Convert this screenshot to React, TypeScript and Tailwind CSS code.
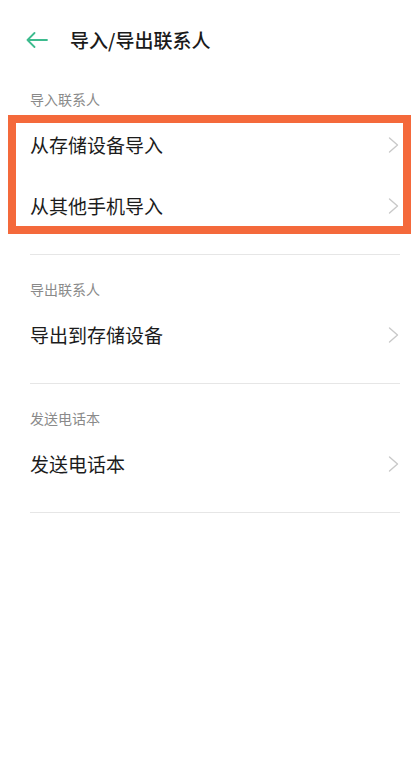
const font = { fontFamily: '"Noto Sans CJK SC", "Noto Sans", sans-serif' }

function BackArrow() {
  return (
    <svg width="22" height="16" viewBox="0 0 22 16" fill="none" className="shrink-0">
      <path d="M1.5 8H21M8.5 1L1.5 8L8.5 15" stroke="#3dbb8e" strokeWidth="1.8" strokeLinecap="round" strokeLinejoin="round" />
    </svg>
  )
}

function Row({ label }: { label: string }) {
  return (
    <div className="flex h-[61px] items-center justify-between pl-[30px] pr-[20px]">
      <span className="text-[19px] leading-6 text-[#1c1c1c]">{label}</span>
      <svg width="11" height="16" viewBox="0 0 11 16" fill="none">
        <path d="M1.5 1L9.5 8L1.5 15" stroke="#c9c9c9" strokeWidth="1.4" strokeLinecap="round" strokeLinejoin="round" />
      </svg>
    </div>
  )
}

function Section({ title, items, first }: { title: string; items: string[]; first?: boolean }) {
  return (
    <div className={first ? 'pt-[9px]' : 'pt-[24px]'}>
      <p className="px-[30px] text-[14px] leading-5 text-[#8a8a8a]">{title}</p>
      <div className="mt-[5px]">
        {items.map(item => (
          <Row key={item} label={item} />
        ))}
      </div>
      <div className="ml-[30px] mr-[19px] mt-[18px] h-px bg-[#e6e6e6]" />
    </div>
  )
}

export default function App() {
  return (
    <div className="relative min-h-[782px] w-[419px] bg-white" style={font}>
      {/* Header */}
      <header className="flex h-[80px] items-center gap-[22px] pl-[26px]">
        <BackArrow />
        <h1 className="text-[19px] font-medium leading-7 text-[#1a1a1a]">导入/导出联系人</h1>
      </header>

      <Section first title="导入联系人" items={['从存储设备导入', '从其他手机导入']} />
      <Section title="导出联系人" items={['导出到存储设备']} />
      <Section title="发送电话本" items={['发送电话本']} />

      {/* annotation highlight */}
      <div className="pointer-events-none absolute left-[8px] top-[115px] h-[119px] w-[403px] border-[8px] border-[#f4693b]" />
    </div>
  )
}
